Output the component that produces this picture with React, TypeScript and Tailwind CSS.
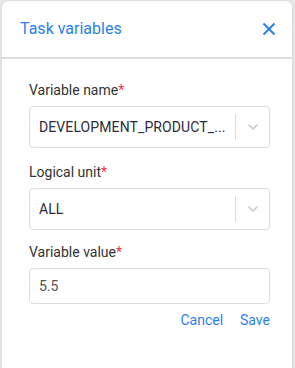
import React, { useState } from 'react';

const BLUE = 'text-[#2b7fe8]';

const Chevron: React.FC = () => (
  <svg width="10" height="6" viewBox="0 0 10 6" fill="none">
    <path d="M1 1l4 4 4-4" stroke="#c8c8c8" strokeWidth="1.6" strokeLinecap="round" strokeLinejoin="round" />
  </svg>
);

const Label: React.FC<{ text: string; className?: string }> = ({ text, className }) => (
  <div className={`text-[14px] leading-[20px] text-[#333] ${className ?? ''}`}>
    {text}
    <span className="text-[#f0334a]">*</span>
  </div>
);

const SelectBox: React.FC<{ value: string }> = ({ value }) => (
  <div className="mt-[6px] flex h-[42px] items-center rounded-[4px] border border-[#dcdcdc] bg-white">
    <div className="min-w-0 flex-1 whitespace-nowrap pl-[9px] text-[14px] tracking-[0.1px] text-[#2c2c3c]">{value}</div>
    <div className="h-[26px] w-px bg-[#dcdcdc]" />
    <div className="flex w-[33px] justify-center">
      <Chevron />
    </div>
  </div>
);

const App: React.FC = () => {
  const [value, setValue] = useState('5.5');

  return (
    <div className="h-[368px] w-[295px] overflow-hidden bg-[#e9e9e9] pl-[2px] pr-[3px] pt-[1px]" style={{ fontFamily: 'Roboto, "Noto Sans", sans-serif' }}>
      <div className="h-[372px] rounded-[6px] bg-white shadow-[0_0_3px_rgba(0,0,0,0.15)]">
        <div className="flex h-[56px] items-start justify-between pl-[18px] pr-[16px] pt-[16px]">
          <div className={`text-[16px] leading-[24px] ${BLUE}`}>Task variables</div>
          <button className="mt-[5px] flex h-[14px] w-[14px] items-center justify-center">
            <svg width="14" height="14" viewBox="0 0 14 14" fill="none">
              <path d="M1.5 1.5l11 11M12.5 1.5l-11 11" stroke="#2b7fe8" strokeWidth="2" />
            </svg>
          </button>
        </div>
        <div className="h-[2px] bg-[#dedede]" />
        <div className="pl-[27px] pr-[22px] pt-[21px]">
          <Label text="Variable name" />
          <SelectBox value="DEVELOPMENT_PRODUCT_..." />
          <Label text="Logical unit" className="mt-[14px]" />
          <SelectBox value="ALL" />
          <Label text="Variable value" className="mt-[12px]" />
          <input
            value={value}
            onChange={(e) => setValue(e.target.value)}
            className="mt-[6px] block h-[36px] w-full rounded-[4px] border border-[#dcdcdc] pl-[9px] text-[14px] text-[#555] outline-none"
          />
          <div className="mt-[6px] flex justify-end gap-[17px] text-[14px] leading-[20px]">
            <button className={BLUE}>Cancel</button>
            <button className={BLUE}>Save</button>
          </div>
        </div>
      </div>
    </div>
  );
};

export default App;
